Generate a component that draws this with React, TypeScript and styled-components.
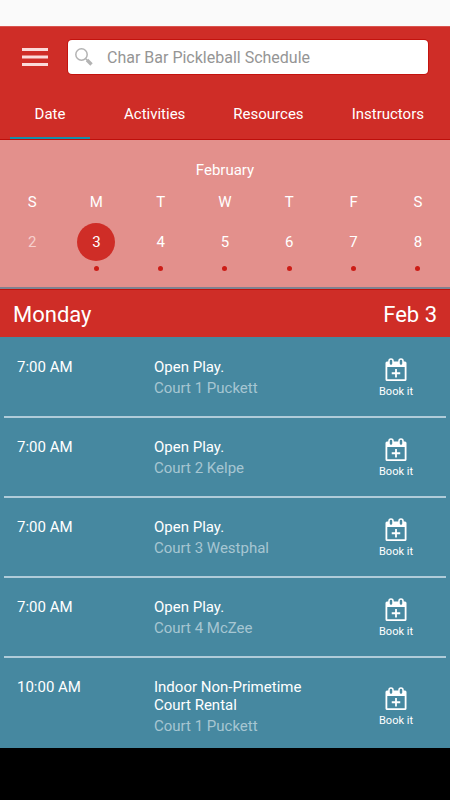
import React, { useState } from "react";
import styled, { createGlobalStyle } from "styled-components";

const red = "#cf2d27";
const teal = "#4688a0";

const GlobalStyle = createGlobalStyle`
  * { box-sizing: border-box; }
  body {
    margin: 0;
    background: #000;
    font-family: Roboto, "Liberation Sans", sans-serif;
    font-size: 15px;
    line-height: 18px;
    color: #fff;
  }
  button, input { font: inherit; color: inherit; }
  button { background: none; border: 0; padding: 0; cursor: pointer; }
`;

const Screen = styled.div`
  display: flex;
  flex-direction: column;
  height: 100vh;
`;

const StatusBar = styled.div`
  flex: none;
  height: 26px;
  background: #fafafa;
`;

const SystemBar = styled.div`
  flex: none;
  height: 52px;
  background: #000;
`;

const Header = styled.header`
  flex: none;
  background: ${red};
  border-top: 1px solid #d9544f;
  border-bottom: 1px solid #bd0f0b;
`;

const Toolbar = styled.div`
  display: flex;
  align-items: center;
  gap: 20px;
  padding: 13px 22px 0;
`;

const MenuButton = styled.button`
  display: flex;
  flex: none;
`;

const SearchBox = styled.label`
  flex: 1;
  min-width: 0;
  display: flex;
  align-items: center;
  gap: 14px;
  height: 34px;
  padding: 0 7px;
  background: #fff;
  border-radius: 4px;
  box-shadow: 0 0 0 1px #c3130e;
`;

const SearchInput = styled.input`
  flex: 1;
  min-width: 0;
  height: 34px;
  padding: 1px 0 0;
  border: 0;
  outline: 0;
  background: transparent;
  color: #555;
  font-size: 16px;
  &::placeholder { color: #959595; opacity: 1; }
`;

const Tabs = styled.nav`
  display: flex;
  margin-top: 16px;
  overflow-x: auto;
  scrollbar-width: none;
`;

const Tab = styled.button<{ $active: boolean }>`
  display: flex;
  flex-direction: column;
  flex: none;
  align-items: center;
  justify-content: space-between;
  min-width: 100px;
  height: 49px;
  padding: 15px 24px 0;
  &:first-child { padding: 15px 10px 0; }
  &::after {
    content: "";
    align-self: stretch;
    height: 2px;
    background: ${(p) => (p.$active ? "#168fab" : "transparent")};
  }
`;

const Calendar = styled.section`
  flex: none;
  padding: 21px 0 16px;
  background: #e3908c;
  border-bottom: 2px solid #80818f;
`;

const Month = styled.h2`
  margin: 0 0 14px;
  font-size: 15px;
  font-weight: 400;
  text-align: center;
`;

const Week = styled.div`
  display: grid;
  grid-template-columns: repeat(7, 1fr);
`;

const Day = styled.button<{ $past: boolean }>`
  display: flex;
  flex-direction: column;
  align-items: center;
  color: ${(p) => (p.$past ? "#f6cfcd" : "#fff")};
`;

const Weekday = styled.span`
  margin-bottom: 12px;
  color: #fff;
`;

const DayNumber = styled.span<{ $selected: boolean }>`
  display: flex;
  align-items: center;
  justify-content: center;
  width: 38px;
  height: 38px;
  border-radius: 50%;
  background: ${(p) => (p.$selected ? red : "transparent")};
`;

const Dot = styled.span<{ $visible: boolean }>`
  width: 5px;
  height: 5px;
  margin-top: 5px;
  border-radius: 50%;
  background: ${(p) => (p.$visible ? "#cc1c16" : "transparent")};
`;

const DateBar = styled.h1`
  flex: none;
  display: flex;
  align-items: center;
  justify-content: space-between;
  height: 48px;
  margin: 0;
  padding: 2px 13px 0;
  background: ${red};
  border-top: 1px solid #c0110c;
  font-size: 22px;
  font-weight: 400;
`;

const List = styled.ul`
  flex: 1;
  min-height: 0;
  margin: 0;
  padding: 1px 0 0;
  list-style: none;
  overflow-y: auto;
  scrollbar-width: none;
  background: ${teal};
`;

const Item = styled.li`
  padding: 0 4px;
  &::after {
    content: "";
    display: block;
    height: 2px;
    background: #b0ccd9;
  }
`;

const Row = styled.div`
  display: grid;
  grid-template-columns: 125px 1fr 100px;
  gap: 12px;
  padding-left: 13px;
`;

const Time = styled.time`
  padding-top: 20px;
`;

const Details = styled.div`
  display: flex;
  flex-direction: column;
  gap: 3px;
  padding: 20px 0 19px;
`;

const Court = styled.span`
  color: #a6c6d2;
`;

const BookButton = styled.button`
  display: flex;
  flex-direction: column;
  align-items: center;
  align-self: center;
  gap: 2px;
  padding-top: 4px;
  font-size: 11px;
  line-height: 16px;
`;

const MenuIcon = () => (
  <svg width="26" height="20" viewBox="0 0 26 20" fill="#fbdad9" aria-hidden="true">
    <path d="M0 1h26v3H0zM0 8.500h26v3H0zM0 16h26v3H0z" />
  </svg>
);

const SearchIcon = () => (
  <svg width="18" height="18" viewBox="0 0 18 18" fill="none" stroke="#b3b3b3" aria-hidden="true">
    <circle cx="6.500" cy="6.500" r="5.700" strokeWidth="1.500" />
    <path d="M10.500 10.500l2 2" strokeWidth="1.500" />
    <path d="M12 12l4.500 4.500" strokeWidth="3.400" />
  </svg>
);

const BookIcon = () => (
  <svg width="22" height="24" viewBox="0 0 22 24" aria-hidden="true">
    <path
      fill="#fff"
      fillRule="evenodd"
      d="M2 3.500h18a1.500 1.500 0 0 1 1.500 1.500v16.500a1.500 1.500 0 0 1-1.500 1.500H2a1.500 1.500 0 0 1-1.500-1.500V5A1.500 1.500 0 0 1 2 3.500zM2.300 9v12.300h17.400V9z"
    />
    <rect x="4" y="1" width="4" height="6.500" rx="2" fill={teal} stroke="#fff" strokeWidth="1.500" />
    <rect x="14" y="1" width="4" height="6.500" rx="2" fill={teal} stroke="#fff" strokeWidth="1.500" />
    <path d="M11 11v8.500M6.750 15.250h8.500" stroke="#fff" strokeWidth="1.800" />
  </svg>
);

const tabs = ["Date", "Activities", "Resources", "Instructors"];
const days = [
  { name: "Sunday", date: 2 },
  { name: "Monday", date: 3 },
  { name: "Tuesday", date: 4 },
  { name: "Wednesday", date: 5 },
  { name: "Thursday", date: 6 },
  { name: "Friday", date: 7 },
  { name: "Saturday", date: 8 },
];
const sessions = [
  { time: "7:00 AM", title: "Open Play.", court: "Court 1 Puckett" },
  { time: "7:00 AM", title: "Open Play.", court: "Court 2 Kelpe" },
  { time: "7:00 AM", title: "Open Play.", court: "Court 3 Westphal" },
  { time: "7:00 AM", title: "Open Play.", court: "Court 4 McZee" },
  { time: "10:00 AM", title: "Indoor Non-Primetime Court Rental", court: "Court 1 Puckett" },
];

export default function App() {
  const [tab, setTab] = useState("Date");
  const [selected, setSelected] = useState(days[1]);
  return (
    <Screen>
      <GlobalStyle />
      <StatusBar />
      <Header>
        <Toolbar>
          <MenuButton aria-label="Menu"><MenuIcon /></MenuButton>
          <SearchBox>
            <SearchIcon />
            <SearchInput type="text" aria-label="Search schedule" placeholder="Char Bar Pickleball Schedule" />
          </SearchBox>
        </Toolbar>
        <Tabs>
          {tabs.map((name) => (
            <Tab key={name} $active={name === tab} onClick={() => setTab(name)}>{name}</Tab>
          ))}
        </Tabs>
      </Header>
      <Calendar>
        <Month>February</Month>
        <Week>
          {days.map((day) => (
            <Day key={day.date} $past={day.date < 3} onClick={() => setSelected(day)}>
              <Weekday>{day.name[0]}</Weekday>
              <DayNumber $selected={day === selected}>{day.date}</DayNumber>
              <Dot $visible={day.date >= 3} />
            </Day>
          ))}
        </Week>
      </Calendar>
      <DateBar>
        <span>{selected.name}</span>
        <span>Feb {selected.date}</span>
      </DateBar>
      <List>
        {sessions.map((s) => (
          <Item key={s.court + s.time}>
            <Row>
              <Time>{s.time}</Time>
              <Details>
                <span>{s.title}</span>
                <Court>{s.court}</Court>
              </Details>
              <BookButton><BookIcon />Book it</BookButton>
            </Row>
          </Item>
        ))}
      </List>
      <SystemBar />
    </Screen>
  );
}
